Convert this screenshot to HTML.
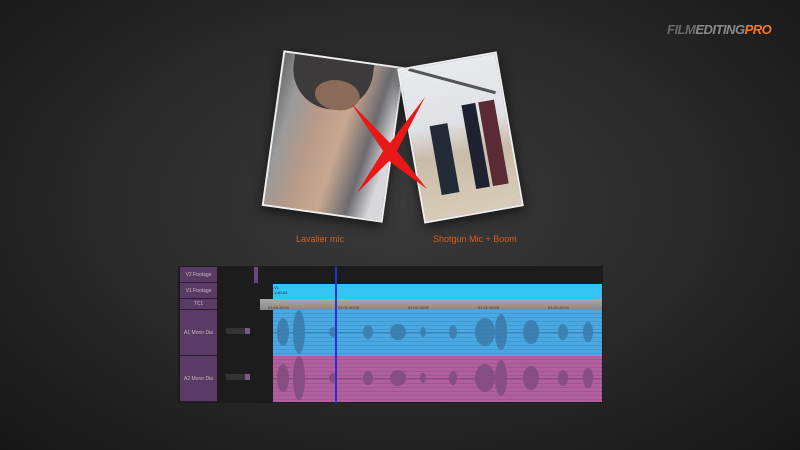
<!DOCTYPE html>
<html><head><meta charset="utf-8"><style>
*{margin:0;padding:0;box-sizing:border-box}
body{width:800px;height:450px;overflow:hidden;background:radial-gradient(ellipse at 50% 45%,#3a3a3a 0%,#2c2c2c 45%,#161616 100%);font-family:"Liberation Sans",sans-serif;position:relative}
.abs{position:absolute}
.logo{left:667px;top:22px;font-size:13px;font-style:italic;font-weight:bold;letter-spacing:-0.5px;color:#6a6a6a}
.logo b{color:#f07a1e}
.photo{position:absolute;border:2px solid #eee;box-shadow:0 4px 12px rgba(0,0,0,.6);overflow:hidden}
.lbl{font-size:9px;color:#d8601e}
.tl{left:178px;top:266px;width:425px;height:137px;background:#1c1c1c}
.hd{position:absolute;left:2px;width:37px;background:#5a3a66;color:#cbb;font-size:5px;text-align:center;border-bottom:1px solid #2a1a30}
</style></head><body>
<div class="abs logo">FILM<span style="color:#8a8a8a">EDITING</span><b>PRO</b></div>

<div class="photo" style="left:272px;top:58px;width:122px;height:157px;transform:rotate(8deg);background:linear-gradient(100deg,#6a6a6a 0%,#9a9a9a 15%,#b79a88 35%,#c9a890 55%,#6b6b70 75%,#d8d8dc 90%);">
<div class="abs" style="left:10px;top:0;width:80px;height:50px;background:#3c3a3a;border-radius:0 0 40px 40px"></div>
<div class="abs" style="left:35px;top:20px;width:45px;height:30px;background:#8a6a58;border-radius:50%"></div>
</div>
<div class="photo" style="left:410px;top:59px;width:101px;height:157px;transform:rotate(-10deg);background:linear-gradient(180deg,#e8eaee 0%,#dfe1e4 40%,#c9bba8 60%,#d8ccb8 100%);">
<div class="abs" style="left:20px;top:60px;width:18px;height:70px;background:#222a38"></div>
<div class="abs" style="left:55px;top:45px;width:14px;height:85px;background:#1e2230"></div>
<div class="abs" style="left:72px;top:45px;width:16px;height:85px;background:#5a2a35"></div>
<div class="abs" style="left:5px;top:18px;width:90px;height:3px;background:#555;transform:rotate(25deg)"></div>
</div>
<svg class="abs" style="left:345px;top:95px" width="85" height="100"><path d="M6 8 L45 48 L80 2 L52 56 L82 94 L44 66 L12 98 L38 56 Z" fill="#e81818"/></svg>

<div class="abs lbl" style="left:296px;top:234px">Lavalier mic</div>
<div class="abs lbl" style="left:433px;top:234px">Shotgun Mic + Boom</div>

<div class="abs tl">
<div class="hd" style="top:1px;height:16px;line-height:16px">V2 Footage</div>
<div class="hd" style="top:17px;height:16px;line-height:16px">V1 Footage</div>
<div class="hd" style="top:33px;height:11px;line-height:11px">TC1</div>
<div class="hd" style="top:44px;height:46px;line-height:46px">A1 Mono Dia</div>
<div class="hd" style="top:90px;height:46px;line-height:46px">A2 Mono Dia</div>
<div class="abs" style="left:76px;top:1px;width:4px;height:16px;background:#6a4a7a"></div>
<div class="abs" style="left:95px;top:18px;width:329px;height:15px;background:#35c4f4;font-size:4px;color:#124;padding:1px">V1<br>1:40:04</div>
<div class="abs" style="left:82px;top:33px;width:342px;height:11px;background:linear-gradient(#aaa,#888);font-size:4px;color:#333">
<span class="abs" style="left:8px;top:6px">01:00:45:00</span><span class="abs" style="left:78px;top:6px">01:01:00:00</span><span class="abs" style="left:148px;top:6px">01:01:15:00</span><span class="abs" style="left:218px;top:6px">01:01:30:00</span><span class="abs" style="left:288px;top:6px">01:01:45:00</span></div>
<div class="abs" style="left:95px;top:44px;width:329px;height:46px;background:repeating-linear-gradient(#4aa8e2 0,#4aa8e2 3px,#3f98d2 3px,#3f98d2 4px)">
<svg class="abs" style="left:0;top:0" width="329" height="46"><g fill="#3a78a8" opacity=".8">
<rect x="0" y="22" width="329" height="1"/><ellipse cx="10" cy="22" rx="6" ry="14"/><ellipse cx="26" cy="22" rx="6" ry="22"/><ellipse cx="60" cy="22" rx="4" ry="5"/><ellipse cx="95" cy="22" rx="5" ry="7"/><ellipse cx="125" cy="22" rx="8" ry="8"/><ellipse cx="150" cy="22" rx="3" ry="5"/><ellipse cx="180" cy="22" rx="4" ry="7"/><ellipse cx="212" cy="22" rx="10" ry="14"/><ellipse cx="228" cy="22" rx="6" ry="18"/><ellipse cx="258" cy="22" rx="8" ry="12"/><ellipse cx="290" cy="22" rx="5" ry="8"/><ellipse cx="315" cy="22" rx="5" ry="10"/></g></svg></div>
<div class="abs" style="left:95px;top:90px;width:329px;height:46px;background:repeating-linear-gradient(#b0609e 0,#b0609e 3px,#9e5590 3px,#9e5590 4px)">
<svg class="abs" style="left:0;top:0" width="329" height="46"><g fill="#7e4a7c" opacity=".8">
<rect x="0" y="22" width="329" height="1"/><ellipse cx="10" cy="22" rx="6" ry="14"/><ellipse cx="26" cy="22" rx="6" ry="22"/><ellipse cx="60" cy="22" rx="4" ry="5"/><ellipse cx="95" cy="22" rx="5" ry="7"/><ellipse cx="125" cy="22" rx="8" ry="8"/><ellipse cx="150" cy="22" rx="3" ry="5"/><ellipse cx="180" cy="22" rx="4" ry="7"/><ellipse cx="212" cy="22" rx="10" ry="14"/><ellipse cx="228" cy="22" rx="6" ry="18"/><ellipse cx="258" cy="22" rx="8" ry="12"/><ellipse cx="290" cy="22" rx="5" ry="8"/><ellipse cx="315" cy="22" rx="5" ry="10"/></g></svg></div>
<div class="abs" style="left:48px;top:62px;width:24px;height:6px;background:#333;border-right:5px solid #7a5a8a"></div>
<div class="abs" style="left:48px;top:108px;width:24px;height:6px;background:#333;border-right:5px solid #7a5a8a"></div>
<div class="abs" style="left:157px;top:1px;width:2px;height:136px;background:#2830d0"></div>
</div>
</body></html>
